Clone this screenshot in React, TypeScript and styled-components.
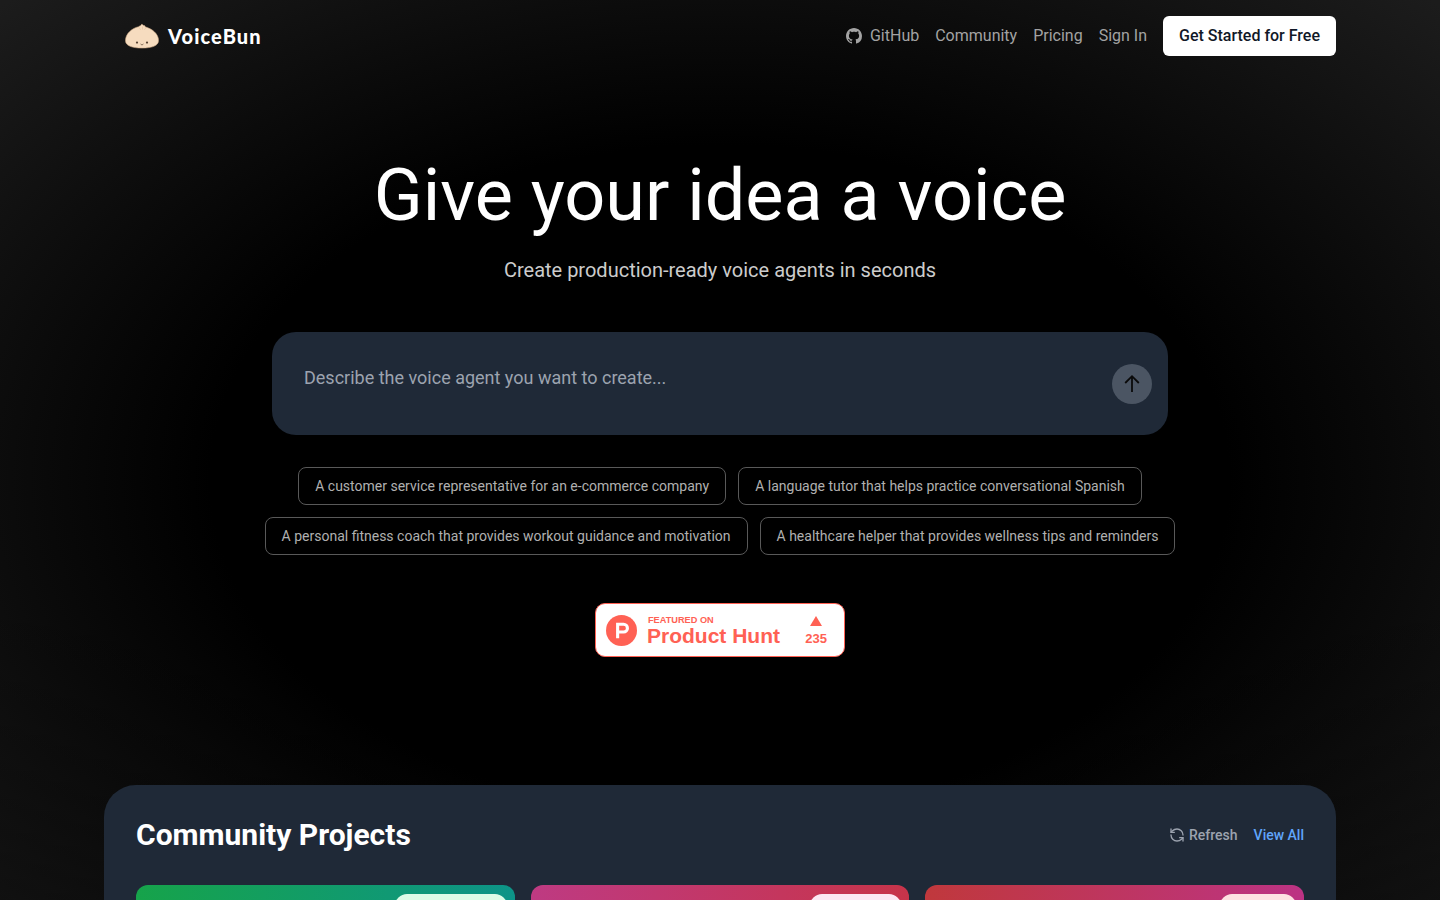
import React from "react";
import styled, { createGlobalStyle } from "styled-components";
import { RefreshCcw } from "lucide-react";

const Global = createGlobalStyle`
  html, body { margin: 0; padding: 0; background: #000; }
  body { font-family: Roboto, "Liberation Sans", sans-serif; overflow-x: hidden; }
  * { box-sizing: border-box; }
`;

const Page = styled.div`
  min-height: 100vh;
  background:
    linear-gradient(to bottom, transparent 65%, rgba(0, 0, 0, 0.35) 100%),
    radial-gradient(ellipse 1018px 670px at 50% 480px, #000 50%, #1c1c1c 100%);
  background-size: 100% 900px;
  background-repeat: no-repeat;
  display: flex;
  flex-direction: column;
  align-items: center;
`;

const Nav = styled.header`
  width: 1232px;
  height: 72px;
  padding: 0 0 0 20px;
  display: flex;
  align-items: center;
  justify-content: space-between;
`;

const Brand = styled.a`
  display: flex;
  align-items: center;
  gap: 8px;
  color: #fff;
  font-family: "Lato", sans-serif;
  font-weight: 900;
  font-size: 20px;
  letter-spacing: 1.1px;
`;

const Links = styled.nav`
  display: flex;
  align-items: center;
  gap: 16px;
`;

const NavLink = styled.a`
  display: flex;
  align-items: center;
  gap: 8px;
  font-size: 16px;
  line-height: 24px;
  color: #a3a3a3;
`;

const Cta = styled.button`
  height: 40px;
  padding: 0 16px;
  border: 0;
  border-radius: 6px;
  background: #fff;
  color: #111827;
  font: 500 16px/24px Roboto, sans-serif;
`;

const Hero = styled.section`
  display: flex;
  flex-direction: column;
  align-items: center;
  padding-top: 80px;
`;

const Title = styled.h1`
  margin: 0;
  font-size: 72px;
  line-height: 88px;
  font-weight: 400;
  color: #fff;
`;

const Subtitle = styled.p`
  margin: 16px 0 0;
  font-size: 20px;
  line-height: 28px;
  color: #cccccc;
`;

const Prompt = styled.div`
  margin-top: 48px;
  width: 896px;
  height: 103px;
  border-radius: 24px;
  background: #1f2937;
  padding: 32px 16px 0 32px;
  display: flex;
  justify-content: space-between;
  align-items: flex-start;
`;

const Placeholder = styled.span`
  font-size: 18px;
  line-height: 28px;
  color: #9ca3af;
`;

const Send = styled.button`
  width: 40px;
  height: 40px;
  border: 0;
  padding: 0;
  border-radius: 50%;
  background: #4b5563;
  display: flex;
  align-items: center;
  justify-content: center;
  color: #0a0a0a;
`;

const Chips = styled.div`
  margin-top: 32px;
  width: 1000px;
  display: flex;
  flex-wrap: wrap;
  justify-content: center;
  gap: 12px;
`;

const Chip = styled.button`
  height: 38px;
  padding: 0 16px;
  border: 1px solid #595959;
  border-radius: 8px;
  background: transparent;
  color: #b0b0b0;
  font: 400 14px/20px Roboto, sans-serif;
`;

const Badge = styled.a`
  margin-top: 48px;
  width: 250px;
  height: 54px;
  border: 1px solid #ff6154;
  border-radius: 10px;
  background: #fff;
  color: #ff6154;
  display: flex;
  align-items: center;
  padding: 0 17px 0 10px;
  font-family: "Liberation Sans", Arial, sans-serif;
  font-weight: 700;
`;

const BadgeText = styled.div`
  margin: 11px 0 0 10px;
  align-self: flex-start;
  flex: 1;
  display: flex;
  flex-direction: column;
`;

const Featured = styled.span`
  font-size: 9.2px;
  line-height: 10px;
  padding-left: 1px;
`;

const BadgeName = styled.span`
  margin-top: -1px;
  font-size: 21px;
  line-height: 23px;
`;

const Votes = styled.div`
  margin-top: 2px;
  display: flex;
  flex-direction: column;
  align-items: center;
  gap: 6px;
  font-size: 13px;
  line-height: 14px;
`;

const Community = styled.section`
  margin-top: 128px;
  width: 1232px;
  border-radius: 32px 32px 0 0;
  background: #1f2937;
  padding: 32px;
`;

const SectionHead = styled.div`
  height: 36px;
  display: flex;
  align-items: center;
  justify-content: space-between;
`;

const SectionTitle = styled.h2`
  margin: 0;
  font-size: 30px;
  line-height: 36px;
  font-weight: 700;
  color: #fff;
`;

const Actions = styled.div`
  display: flex;
  align-items: center;
  gap: 16px;
`;

const Refresh = styled.a`
  display: flex;
  align-items: center;
  gap: 4px;
  font-size: 14px;
  line-height: 20px;
  font-weight: 500;
  color: #9ca3af;
`;

const ViewAll = styled.a`
  font-size: 14px;
  line-height: 20px;
  font-weight: 500;
  color: #60a5fa;
`;

const Grid = styled.div`
  margin-top: 32px;
  display: grid;
  grid-template-columns: repeat(3, 1fr);
  gap: 16px;
`;

const Card = styled.div<{ $from: string; $to: string }>`
  height: 200px;
  border-radius: 12px;
  background: linear-gradient(to right, ${(p) => p.$from}, ${(p) => p.$to});
  padding: 9px 8px 0 0;
  display: flex;
  justify-content: flex-end;
  align-items: flex-start;
`;

const Pill = styled.span<{ $bg: string; $w: number }>`
  width: ${(p) => p.$w}px;
  height: 24px;
  border-radius: 12px;
  background: ${(p) => p.$bg};
`;

const Bun = () => (
  <svg width="36" height="26" viewBox="0 0 36 26">
    <path
      d="M1.5 17.5C1.5 10.5 8.5 5 14.5 3.8c.6-.2.8-.9 1.6-.9.6 0 .9-.9 1.6-1.6.5-.5 1 .6 1.4 1 .5.4 1.4.1 1.8.6.3.4.2.8.6 1.1C27.5 5.5 34.5 10.5 34.5 17.5c0 5.5-7 7.5-16.5 7.5S1.5 23 1.5 17.5z"
      fill="#f6dcbf"
      stroke="#d8b48e"
      strokeWidth="0.6"
    />
    <path d="M15 4.5c.6 1 1 1.6 1.6 2.2M18.5 3.5v3M22 4.5c-.5 1-1 1.6-1.6 2.2" stroke="#e6c6a2" strokeWidth="0.8" fill="none" />
    <circle cx="13" cy="19.6" r="1.1" fill="#5a4636" />
    <circle cx="23" cy="19.6" r="1.1" fill="#5a4636" />
    <path d="M16.6 21c.9 1 1.9 1 2.8 0" stroke="#5a4636" strokeWidth="0.8" fill="none" />
  </svg>
);

const GitHub = () => (
  <svg width="16" height="16" viewBox="0 0 16 16" fill="currentColor">
    <path d="M8 0C3.58 0 0 3.58 0 8c0 3.54 2.29 6.53 5.47 7.59.4.07.55-.17.55-.38 0-.19-.01-.82-.01-1.49-2.01.37-2.53-.49-2.69-.94-.09-.23-.48-.94-.82-1.13-.28-.15-.68-.52-.01-.53.63-.01 1.08.58 1.23.82.72 1.21 1.87.87 2.33.66.07-.52.28-.87.51-1.07-1.78-.2-3.64-.89-3.64-3.95 0-.87.31-1.59.82-2.15-.08-.2-.36-1.02.08-2.12 0 0 .67-.21 2.2.82.64-.18 1.32-.27 2-.27s1.36.09 2 .27c1.53-1.04 2.2-.82 2.2-.82.44 1.1.16 1.92.08 2.12.51.56.82 1.27.82 2.15 0 3.07-1.87 3.75-3.65 3.95.29.25.54.73.54 1.48 0 1.07-.01 1.93-.01 2.2 0 .21.15.46.55.38A8.01 8.01 0 0 0 16 8c0-4.42-3.58-8-8-8z" />
  </svg>
);

const ArrowUp = () => (
  <svg width="24" height="24" viewBox="0 0 24 24" fill="none" stroke="currentColor" strokeWidth="1.8">
    <path d="M12 20V4.5M5.2 11 12 4.2l6.8 6.8" />
  </svg>
);

const PhLogo = () => (
  <svg width="31" height="31" viewBox="0 0 40 40">
    <circle cx="20" cy="20" r="20" fill="#ff6154" />
    <path d="M22.667 20H17v-6h5.667a3 3 0 0 1 0 6m0-10H13v20h4v-6h5.667a7 7 0 1 0 0-14" fill="#fff" />
  </svg>
);

const prompts = [
  "A customer service representative for an e-commerce company",
  "A language tutor that helps practice conversational Spanish",
  "A personal fitness coach that provides workout guidance and motivation",
  "A healthcare helper that provides wellness tips and reminders",
];

const cards = [
  { from: "#16a34a", to: "#0d9488", pill: "#dcfce7", w: 112 },
  { from: "#be3a82", to: "#c7344a", pill: "#fce7f3", w: 91 },
  { from: "#c0383c", to: "#bc3384", pill: "#fee2e2", w: 76 },
];

export default function App() {
  return (
    <Page>
      <Global />
      <Nav>
        <Brand><Bun />VoiceBun</Brand>
        <Links>
          <NavLink><GitHub />GitHub</NavLink>
          <NavLink>Community</NavLink>
          <NavLink>Pricing</NavLink>
          <NavLink>Sign In</NavLink>
          <Cta>Get Started for Free</Cta>
        </Links>
      </Nav>
      <Hero>
        <Title>Give your idea a voice</Title>
        <Subtitle>Create production-ready voice agents in seconds</Subtitle>
        <Prompt>
          <Placeholder>Describe the voice agent you want to create...</Placeholder>
          <Send aria-label="Send"><ArrowUp /></Send>
        </Prompt>
        <Chips>
          {prompts.map((p) => <Chip key={p}>{p}</Chip>)}
        </Chips>
        <Badge>
          <PhLogo />
          <BadgeText>
            <Featured>FEATURED ON</Featured>
            <BadgeName>Product Hunt</BadgeName>
          </BadgeText>
          <Votes>
            <svg width="12" height="10" viewBox="0 0 12 10"><path d="M6 0l6 10H0z" fill="#ff6154" /></svg>
            235
          </Votes>
        </Badge>
      </Hero>
      <Community>
        <SectionHead>
          <SectionTitle>Community Projects</SectionTitle>
          <Actions>
            <Refresh><RefreshCcw size={16} />Refresh</Refresh>
            <ViewAll>View All</ViewAll>
          </Actions>
        </SectionHead>
        <Grid>
          {cards.map((c) => (
            <Card key={c.from} $from={c.from} $to={c.to}>
              <Pill $bg={c.pill} $w={c.w} />
            </Card>
          ))}
        </Grid>
      </Community>
    </Page>
  );
}
